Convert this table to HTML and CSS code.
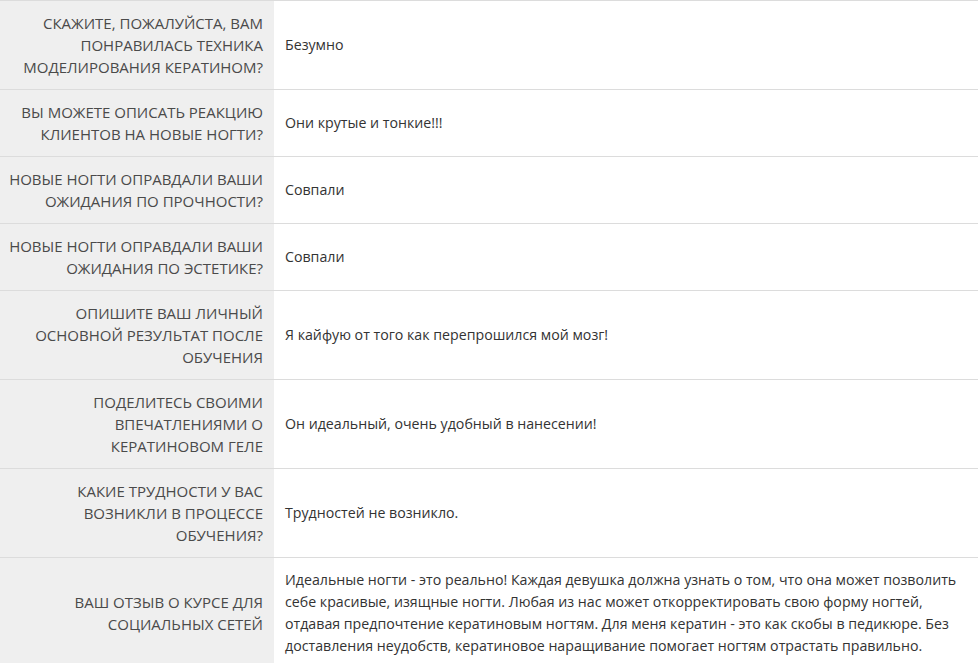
FILE: index.html
```html
<!DOCTYPE html>
<html lang="ru">
<head>
<meta charset="utf-8">
<link rel="stylesheet" href="styles.css">
</head>
<body>
<table class="qa">
  <tr><th>Скажите, пожалуйста, вам понравилась техника моделирования кератином?</th><td>Безумно</td></tr>
  <tr><th>Вы можете описать реакцию клиентов на новые ногти?</th><td>Они крутые и тонкие!!!</td></tr>
  <tr><th>Новые ногти оправдали ваши ожидания по прочности?</th><td>Совпали</td></tr>
  <tr><th>Новые ногти оправдали ваши ожидания по эстетике?</th><td>Совпали</td></tr>
  <tr><th>Опишите ваш личный основной результат после обучения</th><td>Я кайфую от того как перепрошился мой мозг!</td></tr>
  <tr><th>Поделитесь своими впечатлениями о кератиновом геле</th><td>Он идеальный, очень удобный в нанесении!</td></tr>
  <tr><th>Какие трудности у вас возникли в процессе обучения?</th><td>Трудностей не возникло.</td></tr>
  <tr><th>Ваш отзыв о курсе для социальных сетей</th><td>Идеальные ногти - это реально! Каждая девушка должна узнать о том, что она может позволить себе красивые, изящные ногти. Любая из нас может откорректировать свою форму ногтей, отдавая предпочтение кератиновым ногтям. Для меня кератин - это как скобы в педикюре. Без доставления неудобств, кератиновое наращивание помогает ногтям отрастать правильно.</td></tr>
</table>
</body>
</html>
```
FILE: styles.css
```css
html, body {
  margin: 0;
  padding: 0;
  background: #fff;
}
.qa {
  width: 978px;
  border-collapse: collapse;
  font-family: "Open Sans", sans-serif;
  font-size: 14.2px;
  line-height: 22px;
}
.qa tr {
  border-top: 1px solid #dcdcdc;
}
.qa th {
  width: 259px;
  padding: 11px 11px 11px 4px;
  background: #efefef;
  color: #4a4a4a;
  font-size: 15px;
  text-align: right;
  font-weight: 400;
  text-transform: uppercase;
  vertical-align: middle;
}
.qa td {
  padding: 11px 11px;
  color: #333;
  vertical-align: middle;
}
```
